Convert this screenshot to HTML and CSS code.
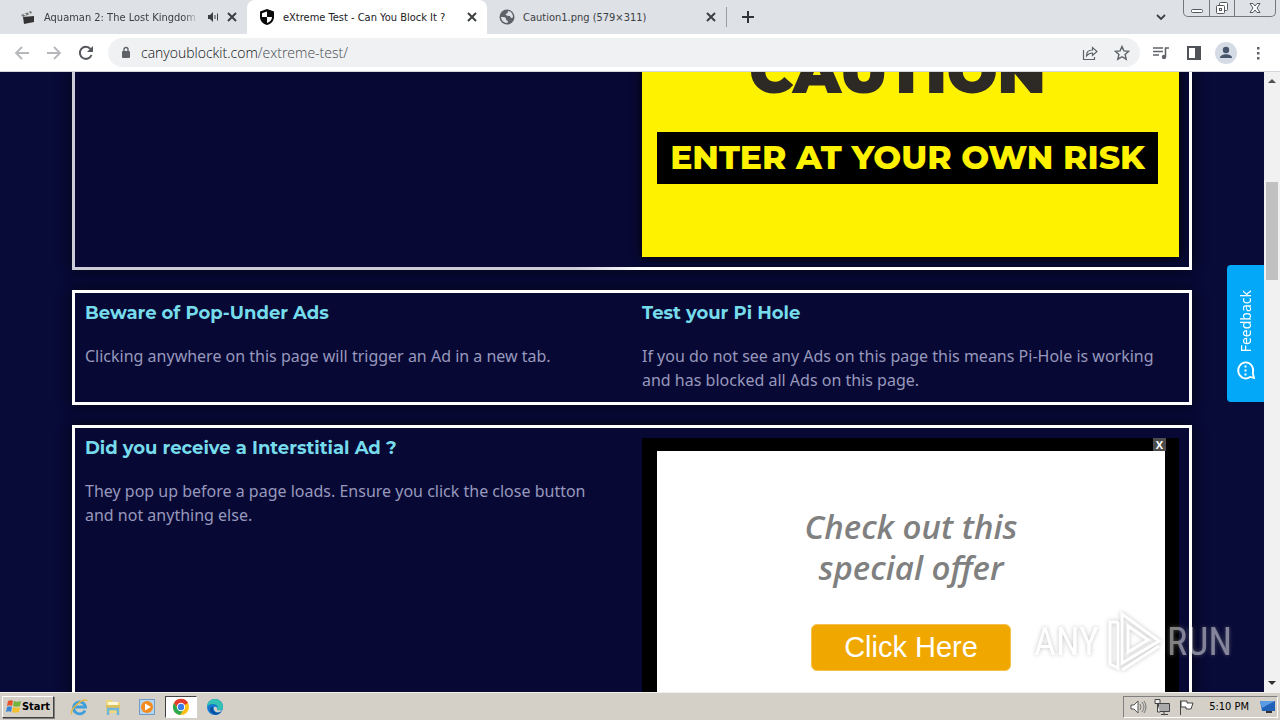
FILE: index.html
```html
<!DOCTYPE html>
<html lang="en">
<head>
<meta charset="utf-8">
<title>eXtreme Test - Can You Block It ?</title>
<link rel="stylesheet" href="styles.css">
</head>
<body>
<header class="tabstrip">
  <div class="tab">
    <svg class="fav" viewBox="0 0 16 16"><path d="M3 8l11-1v6l-10 2z" fill="#333"/><path d="M1 6l10-4 1 2L3 8z" fill="#777"/><path d="M4 5l2 1M8 3l2 2" stroke="#ddd" stroke-width="1.4"/></svg>
    <span class="tab-title fade">Aquaman 2: The Lost Kingdom S</span>
    <svg class="sound" viewBox="0 0 12 12"><path d="M1 4h2l3-3v10L3 8H1z" fill="#3c4043"/><path d="M8 4v4M10.500 2.500v7" stroke="#3c4043" fill="none"/></svg>
    <button class="x" aria-label="Close tab"><svg viewBox="0 0 10 10"><path d="M1 1l8 8M9 1L1 9"/></svg></button>
  </div>
  <div class="tab active">
    <svg class="fav" viewBox="0 0 16 16"><path d="M8 0l7 2.500v5.500c0 4-3 7-7 8-4-1-7-4-7-8V2.500z" fill="#0b0b0b"/><path d="M8 2.500V8H3V4.200zM8 8h5c0 3-2 5-5 6z" fill="#fff"/></svg>
    <span class="tab-title">eXtreme Test - Can You Block It ?</span>
    <button class="x" aria-label="Close tab"><svg viewBox="0 0 10 10"><path d="M1 1l8 8M9 1L1 9"/></svg></button>
  </div>
  <div class="tab">
    <svg class="fav" viewBox="0 0 16 16"><circle cx="8" cy="8" r="7.500" fill="#5f6368"/><path d="M9 2c0 2-1 2-2 3s1 2 3 2 1 2 3 2l1-1c0-3-2-6-5-6zM2 8c3 0 5 0 5 2s2 1 2 3l-1 1c-3 0-6-3-6-6z" fill="#dee1e6"/></svg>
    <span class="tab-title">Caution1.png (579×311)</span>
    <button class="x" aria-label="Close tab"><svg viewBox="0 0 10 10"><path d="M1 1l8 8M9 1L1 9"/></svg></button>
  </div>
  <button class="newtab" aria-label="New tab"><svg viewBox="0 0 12 12"><path d="M6 0v12M0 6h12"/></svg></button>
  <button class="search-tabs" aria-label="Search tabs"><svg viewBox="0 0 12 8"><path d="M2 2l4 4 4-4" fill="none" stroke="#3c4043" stroke-width="1.800"/></svg></button>
  <div class="winctl">
    <button aria-label="Minimize"><svg viewBox="0 0 14 14"><rect x="1.500" y="8.500" width="11" height="3" rx="1"/></svg></button>
    <button aria-label="Restore"><svg viewBox="0 0 14 14"><rect x="4.500" y="1.500" width="8" height="8" rx="1"/><rect x="1.500" y="4.500" width="8" height="8" rx="1"/><rect x="4.500" y="7.500" width="2" height="2"/></svg></button>
    <button class="wide" aria-label="Close"><svg viewBox="0 0 14 14"><path d="M2 2.500h3l2 2.500 2-2.500h3L9 7l3 4.500H9L7 9l-2 2.500H2L5 7z"/></svg></button>
  </div>
</header>
<nav class="toolbar">
  <button class="tb" aria-label="Back"><svg viewBox="0 0 16 16"><path d="M15 8H2M8 2L2 8l6 6" fill="none" stroke="#b5b7ba" stroke-width="1.800"/></svg></button>
  <button class="tb" aria-label="Forward"><svg viewBox="0 0 16 16"><path d="M1 8h13M8 2l6 6-6 6" fill="none" stroke="#b5b7ba" stroke-width="1.800"/></svg></button>
  <button class="tb" aria-label="Reload"><svg viewBox="0 0 16 16"><path d="M13.500 10A6 6 0 1 1 12.500 4" fill="none" stroke="#55585d" stroke-width="2"/><path d="M15 1v6H9z" fill="#55585d"/></svg></button>
  <div class="omnibox">
    <svg class="lock" viewBox="0 0 10 14"><rect x="1" y="5" width="8" height="7" rx="1" fill="#5f6368"/><path d="M3 6V3.500a2 2 0 0 1 4 0V6" fill="none" stroke="#5f6368" stroke-width="1.400"/></svg>
    <span class="url">canyoublockit.com<i>/extreme-test/</i></span>
    <button class="tb end" aria-label="Share"><svg viewBox="0 0 16 16"><path d="M1.500 5v9.500h11V12M4.500 11c0-4 2-6 6-6V2.500L15 6.500l-4.500 4V8c-3 0-4.500 1-6 3z" fill="none" stroke="#5f6368" stroke-width="1.200"/></svg></button>
    <button class="tb" aria-label="Bookmark"><svg viewBox="0 0 16 16"><path d="M8 1.500l1.900 4.400 4.800.4-3.600 3.200 1.100 4.700L8 11.700l-4.200 2.500 1.100-4.700-3.600-3.200 4.800-.4z" fill="none" stroke="#5f6368" stroke-width="1.400"/></svg></button>
  </div>
  <div class="actions">
    <button class="tb media" aria-label="Media"><svg viewBox="0 0 16 16"><path d="M0 3h10M0 6.500h10M0 10h6" stroke="#5f6368" stroke-width="1.600"/><path d="M12.500 12V3H16" fill="none" stroke="#5f6368" stroke-width="1.600"/><circle cx="11" cy="12" r="2.200" fill="#5f6368"/></svg></button>
    <button class="tb" aria-label="Side panel"><svg viewBox="0 0 16 16"><rect x="2" y="2" width="12" height="12" fill="none" stroke="#4f5257" stroke-width="2"/><path d="M9 2h5v12H9z" fill="#4f5257"/></svg></button>
    <button class="tb avatar" aria-label="Profile"><svg viewBox="0 0 22 22"><circle cx="11" cy="11" r="11" fill="#d5dbe5"/><circle cx="11" cy="8" r="3.200" fill="#46546c"/><path d="M5 16c0-5 12-5 12 0z" fill="#46546c"/></svg></button>
    <button class="tb" aria-label="Menu"><svg viewBox="0 0 16 16"><path d="M7 2h2.500v2.500H7zM7 7h2.500v2.500H7zM7 12h2.500v2.500H7z" fill="#5f6368"/></svg></button>
  </div>
</nav>
<div class="viewport">
  <main class="page">
    <section class="card first">
      <div class="col"></div>
      <div class="col">
        <div class="caution">
          <div class="caution-word">CAUTION</div>
          <div class="risk">ENTER AT YOUR OWN RISK</div>
        </div>
      </div>
    </section>
    <section class="card">
      <div class="col"><h2>Beware of Pop-Under Ads</h2><p>Clicking anywhere on this page will trigger an Ad in a new tab.</p></div>
      <div class="col"><h2>Test your Pi Hole</h2><p>If you do not see any Ads on this page this means Pi-Hole is working and has blocked all Ads on this page.</p></div>
    </section>
    <section class="card">
      <div class="col"><h2>Did you receive a Interstitial Ad ?</h2><p>They pop up before a page loads. Ensure you click the close button and not anything else.</p></div>
      <div class="col">
        <div class="ad">
          <button class="ad-close" aria-label="Close ad">X</button>
          <div class="ad-body">
            <div class="offer">Check out this<br>special offer</div>
            <button class="cta">Click Here</button>
          </div>
        </div>
      </div>
    </section>
  </main>
  <button class="feedback"><svg viewBox="0 0 20 20"><path d="M3 18l1-4a8 7.500 0 1 1 4 2.800z" fill="none" stroke="#fff" stroke-width="1.800"/><path d="M5.500 9.500h2M9.500 9.500h2M13.500 9.500h2" stroke="#fff" stroke-width="2"/></svg><span>Feedback</span></button>
  <div class="watermark">
    <span>ANY</span>
    <svg viewBox="0 0 58 64"><path d="M14 12H6v42l8 4V12M18 4l37 27-37 22zM24 16v26l20-12zM18 60l37-24" fill="none" stroke="#fff" stroke-width="3"/></svg>
    <span>RUN</span>
  </div>
  <div class="scrollbar">
    <svg viewBox="0 0 16 16"><path d="M4 11l4-4 4 4z" fill="#505050"/></svg>
    <div class="track"><div class="thumb"></div></div>
    <svg viewBox="0 0 16 16"><path d="M4 5l4 4 4-4z" fill="#303030"/></svg>
  </div>
</div>
<footer class="taskbar">
  <button class="start"><svg viewBox="0 0 16 16"><path d="M2 2c2-1 4-1 5 0L6 7c-2-1-3-1-5 0z" fill="#e5542b"/><path d="M8 2c2 1 4 1 7 0l-1 5c-2 1-5 1-7 0z" fill="#72b43c"/><path d="M1 8c2-1 3-1 5 0l-1 5c-1-1-3-1-5 0z" fill="#3a86d6"/><path d="M7 8c2 1 5 1 7 0l-1 5c-3 1-5 1-7 0z" fill="#f5bf2d"/></svg>Start</button>
  <button class="app" aria-label="Internet Explorer"><svg viewBox="0 0 18 18"><path d="M15 12.500A6 6 0 1 1 15.500 9H5" fill="none" stroke="#3d9edb" stroke-width="2.800"/><path d="M2 16C-1 12 13-1 17 3" fill="none" stroke="#e7b740" stroke-width="1.500"/></svg></button>
  <button class="app" aria-label="Explorer"><svg viewBox="0 0 18 18"><path d="M2 2h6l1 2h7v11H2z" fill="#eed77c"/><path d="M4 4h10v4H4z" fill="#fff8d6"/><path d="M2 7h14v3H2z" fill="#dfc15b"/><path d="M4 17v-6h10v6" fill="none" stroke="#6fb6dc" stroke-width="2.500"/></svg></button>
  <button class="app" aria-label="Media Player"><svg viewBox="0 0 18 18"><rect x="1.500" y="1.500" width="15" height="15" fill="#b8d4ec" stroke="#6c9cc9"/><circle cx="9" cy="9" r="6" fill="#f28a1c"/><path d="M7 5.500l6 3.500-6 3.500z" fill="#fff"/></svg></button>
  <button class="app on" aria-label="Chrome"><svg viewBox="0 0 18 18"><circle cx="9" cy="9" r="8" fill="#fbc116"/><path d="M2 5a8 8 0 0 1 14 0L9 9l-3 2z" fill="#e33b2e"/><path d="M2 5a8 8 0 0 0 6 12l4-6-6 0z" fill="#2da94f"/><circle cx="9" cy="9" r="4.200" fill="#fff"/><circle cx="9" cy="9" r="3.200" fill="#3b7de9"/></svg></button>
  <button class="app" aria-label="Edge"><svg viewBox="0 0 18 18"><circle cx="9" cy="9" r="8" fill="#1479cf"/><path d="M1 9a8 8 0 0 1 16 0c0 3-3 4-6 3 2-4-1-6-4-6S2 7 1 9z" fill="#34c1b4"/><path d="M7 9c-1 5 4 7 8 5-3 4-8 3-10 0s-1-5 2-5z" fill="#0c4f9e"/><path d="M8 9c2-1 4 1 3 3 2 1 4 0 5 0l-2 2c-4 1-7-1-6-5z" fill="#d4d0c8"/></svg></button>
  <div class="tray">
    <svg viewBox="0 0 18 18"><path d="M2 7h3l4-4v12l-4-4H2z" fill="#fff" stroke="#555"/><path d="M11 6q2 3 0 6M13 4q4 5 0 10M15 3q4 6 0 12" fill="none" stroke="#777"/></svg>
    <svg viewBox="0 0 18 18"><path d="M5.500 5.500h11v8h-11zM8 16.500h7M11 14v2" fill="#aaa" stroke="#444"/><path d="M2 1.500h5v4H2zM4.500 6v8H7" fill="#eee" stroke="#444"/></svg>
    <svg viewBox="0 0 18 18"><path d="M3.500 17V2.500M4 3h6v2h6l-2 6H9V9H4z" fill="#fff" stroke="#444"/></svg>
    <time>5:10 PM</time>
    <svg viewBox="0 0 18 18"><path d="M1 3h15v10H3z" fill="#2162b8"/><path d="M1 3h15l-13 7z" fill="#5b9be3"/><path d="M7 13h6v2H7z" fill="#333"/></svg>
  </div>
</footer>
</body>
</html>
```
FILE: styles.css
```css
* { box-sizing: border-box; }
body { margin: 0; height: 100vh; display: flex; flex-direction: column; overflow: hidden; font-family: "Noto Sans", sans-serif; background: #070934; }
button { border: 0; padding: 0; margin: 0; background: none; font: inherit; color: inherit; display: flex; align-items: center; justify-content: center; }
svg { display: block; flex: none; }

.tabstrip { display: flex; height: 34px; flex: none; background: #dee1e6; padding-left: 8px; }
.tab { width: 239px; display: flex; align-items: center; gap: 8px; padding: 0 10px 0 12px; font: 11px "DejaVu Sans Condensed", "Noto Sans", sans-serif; color: #3c4043; }
.tab.active { width: 240px; background: #fff; border-radius: 8px 8px 0 0; color: #202124; }
.fav { width: 16px; height: 16px; }
.tab-title { flex: 1; white-space: nowrap; overflow: hidden; }
.fade { mask-image: linear-gradient(to right, #000 90%, transparent); }
.sound { width: 12px; height: 12px; }
.x svg { width: 10px; height: 10px; stroke: #3c4043; stroke-width: 2; }
.newtab { width: 42px; border-left: 1px solid #9a9da1; height: 20px; align-self: center; }
.newtab svg { width: 12px; height: 12px; stroke: #303336; stroke-width: 2; }
.search-tabs { margin-left: auto; margin-right: 16px; }
.search-tabs svg { width: 12px; height: 8px; }
.winctl { display: flex; height: 17px; margin-right: 4px; border: 1px solid #74777c; border-top: 0; border-radius: 0 0 5px 5px; }
.winctl button { width: 25px; }
.winctl button + button { border-left: 1px solid #74777c; }
.winctl .wide { width: 41px; }
.winctl svg { width: 14px; height: 14px; fill: #fff; stroke: #55585d; stroke-width: 1; }

.toolbar { display: flex; align-items: center; height: 38px; flex: none; background: #fff; border-bottom: 1px solid #d3d6da; padding: 0 14px; gap: 16px; }
.tb svg { width: 16px; height: 16px; }
.actions { display: flex; align-items: center; gap: 13px; margin-left: -3px; }
.media { margin-right: 4px; }
.avatar svg { width: 22px; height: 22px; }
.omnibox { flex: 1; display: flex; align-items: center; height: 29px; border-radius: 15px; background: #eff1f3; padding: 0 10px 0 13px; gap: 16px; margin-left: -2px; }
.lock { width: 10px; height: 14px; margin-right: -6px; }
.url { font: 300 14px "Open Sans", "Noto Sans", sans-serif; color: #101113; }
.url i { font-style: normal; color: #45494e; }
.end { margin-left: auto; }

.viewport { flex: 1; min-height: 0; display: flex; position: relative; overflow: hidden; }
.page { flex: 1; min-width: 0; display: flex; flex-direction: column; gap: 20px; align-items: center; padding: 0 72px; overflow: hidden; color: #9898bd; background: #080a37; }
.card { width: 100%; max-width: 1120px; flex: none; display: grid; grid-template-columns: 1fr 1fr; border: 3px solid #fff; background: #070934; box-shadow: 0 0 12px #040611; }
.card.first { border-top: 0; border-image: linear-gradient(to right, #cccdd8 45%, #fff 51%) 3; }
.col { padding: 10px; min-width: 0; }
.first .col { padding-top: 0; }
h2 { margin: 0 0 21px; font: bold 18px/20px Montserrat, Inter, sans-serif; color: #76dcec; }
p { margin: 0; padding-right: 20px; font-size: 16px; line-height: 24px; }

.caution { height: 185px; background: #fff200; padding: 0 21px 0 15px; box-shadow: 0 0 10px #000; text-align: center; overflow: hidden; white-space: nowrap; }
.caution-word { margin: -26px 0 34px; padding-right: 20px; font: 900 60px/52px Montserrat, Lato, sans-serif; color: #2d2a26; }
.risk { height: 52px; background: #000; color: #fff200; font: 800 33px/50px Montserrat, Lato, sans-serif; }

.ad { background: #000; padding: 13px 14px 0 15px; position: relative; }
.ad-close { position: absolute; top: 0; right: 13px; width: 13px; height: 13px; background: #4c4c4c; color: #fff; font: bold 11px/13px "Open Sans", sans-serif; }
.ad-body { height: 300px; background: #fff; display: flex; flex-direction: column; align-items: center; padding-top: 55px; gap: 36px; }
.offer { font: italic 600 33px/41px "Open Sans", sans-serif; color: #808080; text-align: center; }
.cta { width: 200px; height: 47px; border-radius: 6px; border: 1px solid #f5c04c; background: #f0a800; color: #fff; font: 29px "Liberation Sans", sans-serif; }

.feedback { position: absolute; right: 16px; top: 193px; width: 37px; height: 137px; border-radius: 4px 0 0 4px; background: #03a9f8; color: #fff; font-size: 14px; flex-direction: column-reverse; gap: 8px; padding-top: 4px; }
.feedback span { writing-mode: vertical-rl; transform: rotate(180deg); }
.feedback svg { width: 20px; height: 20px; transform: rotate(-90deg); }
.watermark { position: absolute; right: 48px; bottom: 18px; display: flex; align-items: center; gap: 5px; opacity: 0.5; color: #fff; font: 38px "Liberation Sans Narrow", "Roboto Condensed", sans-serif; filter: drop-shadow(0 0 2px #888); }
.watermark svg { width: 58px; height: 64px; }

.scrollbar { width: 16px; flex: none; background: #f1f1f1; display: flex; flex-direction: column; }
.scrollbar svg { width: 16px; height: 16px; }
.track { flex: 1; padding: 94px 2px 0; }
.thumb { height: 98px; background: #c1c1c1; }

.taskbar { flex: none; height: 28px; display: flex; align-items: center; background: #d4d0c8; border-top: 1px solid #f2f0ec; padding: 2px; }
.start { width: 52px; height: 22px; font: bold 11px "DejaVu Sans Condensed", sans-serif; color: #000; border: 1px solid; border-color: #fff #404040 #404040 #fff; box-shadow: 1px 1px 0 #808080; margin-right: 9px; }
.start svg { width: 16px; height: 16px; }
.app { width: 32px; height: 22px; margin-right: 2px; }
.app svg { width: 18px; height: 18px; }
.app.on { background: #fff; border: 1px solid; border-color: #404040 #fff #fff #404040; }
.tray { margin-left: auto; height: 22px; display: flex; align-items: center; gap: 6px; padding: 0 0 0 5px; border: 1px solid; border-color: #808080 #fff #fff #808080; font: 11px "DejaVu Sans Condensed", sans-serif; color: #000; }
.tray svg { width: 18px; height: 18px; }
.tray time { margin: 0 4px 0 8px; }
```
